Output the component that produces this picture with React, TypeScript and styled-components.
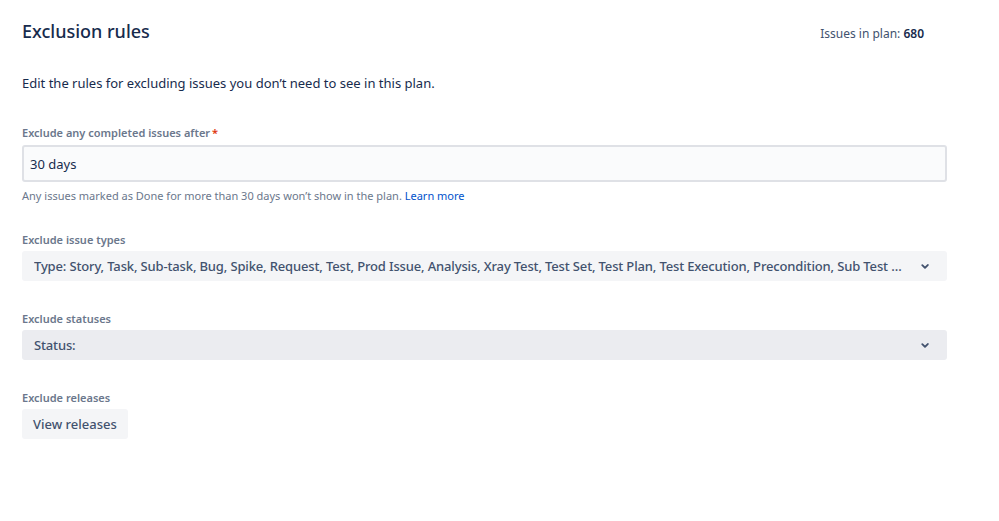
import React from "react";
import styled, { createGlobalStyle } from "styled-components";

const GlobalStyle = createGlobalStyle`
  body {
    margin: 0;
    background: #fff;
    font-family: "Noto Sans", "Open Sans", sans-serif;
    color: #172b4d;
  }
`;

const Page = styled.div`
  width: 925px;
  padding: 17px 0 0 22px;
  display: flex;
  flex-direction: column;
`;

const Header = styled.div`
  display: flex;
  justify-content: space-between;
  align-items: center;
  padding-right: 23px;
`;

const Title = styled.h1`
  margin: 0;
  font-size: 18px;
  font-weight: 500;
  line-height: 28px;
  color: #172b4d;
`;

const Count = styled.div`
  font-size: 12px;
  color: #42526e;
  margin-top: 4px;

  b {
    font-weight: 600;
    color: #172b4d;
  }
`;

const Intro = styled.p`
  margin: 28px 0 0;
  font-size: 13px;
  line-height: 20px;
  color: #172b4d;
`;

const Field = styled.div<{ $gap: number }>`
  display: flex;
  flex-direction: column;
  margin-top: ${(p) => p.$gap}px;
`;

const Label = styled.label`
  font-size: 11px;
  font-weight: 600;
  line-height: 16px;
  color: #6b778c;
  margin-bottom: 3px;
`;

const Required = styled.span`
  color: #de350b;
  margin-left: 2px;
`;

const TextInput = styled.div`
  box-sizing: border-box;
  height: 37px;
  margin-top: 1px;
  border: 2px solid #dfe1e6;
  border-radius: 3px;
  background: #fafbfc;
  padding: 0 6px;
  display: flex;
  align-items: center;
  font-size: 13px;
  color: #172b4d;
`;

const Helper = styled.div`
  margin-top: 6px;
  font-size: 11px;
  line-height: 16px;
  color: #6b778c;

  a {
    color: #0052cc;
    text-decoration: none;
  }
`;

const Select = styled.div<{ $tone: "light" | "dark" }>`
  box-sizing: border-box;
  height: 30px;
  border-radius: 3px;
  background: ${(p) => (p.$tone === "dark" ? "#ebecf0" : "#f4f5f7")};
  padding: 0 11px 0 12px;
  display: flex;
  align-items: center;
  gap: 10px;
  font-size: 13px;
  font-weight: 500;
  color: #42526e;
`;

const SelectText = styled.span`
  flex: 1;
  min-width: 0;
  white-space: nowrap;
  overflow: hidden;
  text-overflow: ellipsis;
  letter-spacing: -0.15px;
`;

const Chevron = styled.svg`
  width: 22px;
  height: 22px;
  flex: none;
`;

const Button = styled.button`
  align-self: flex-start;
  height: 30px;
  padding: 0 11px;
  border: none;
  border-radius: 3px;
  background: #f4f5f7;
  font-family: inherit;
  font-size: 13px;
  font-weight: 500;
  color: #42526e;
  cursor: pointer;
`;

const ChevronDown = () => (
  <Chevron viewBox="0 0 24 24">
    <path
      d="M8.3 10.3a1 1 0 0 1 1.4 0L12 12.6l2.3-2.3a1 1 0 1 1 1.4 1.4l-3 3a1 1 0 0 1-1.4 0l-3-3a1 1 0 0 1 0-1.4z"
      fill="#42526e"
    />
  </Chevron>
);

export default function App() {
  return (
    <>
      <GlobalStyle />
      <Page>
        <Header>
          <Title>Exclusion rules</Title>
          <Count>
            Issues in plan: <b>680</b>
          </Count>
        </Header>
        <Intro>Edit the rules for excluding issues you don’t need to see in this plan.</Intro>

        <Field $gap={32}>
          <Label>
            Exclude any completed issues after<Required>*</Required>
          </Label>
          <TextInput>30 days</TextInput>
          <Helper>
            Any issues marked as Done for more than 30 days won’t show in the plan.{" "}
            <a href="#">Learn more</a>
          </Helper>
        </Field>

        <Field $gap={28}>
          <Label>Exclude issue types</Label>
          <Select $tone="light">
            <SelectText>
              Type: Story, Task, Sub-task, Bug, Spike, Request, Test, Prod Issue, Analysis, Xray
              Test, Test Set, Test Plan, Test Execution, Precondition, Sub Test Execution, Epic
            </SelectText>
            <ChevronDown />
          </Select>
        </Field>

        <Field $gap={30}>
          <Label>Exclude statuses</Label>
          <Select $tone="dark">
            <SelectText>Status:</SelectText>
            <ChevronDown />
          </Select>
        </Field>

        <Field $gap={30}>
          <Label>Exclude releases</Label>
          <Button>View releases</Button>
        </Field>
      </Page>
    </>
  );
}
